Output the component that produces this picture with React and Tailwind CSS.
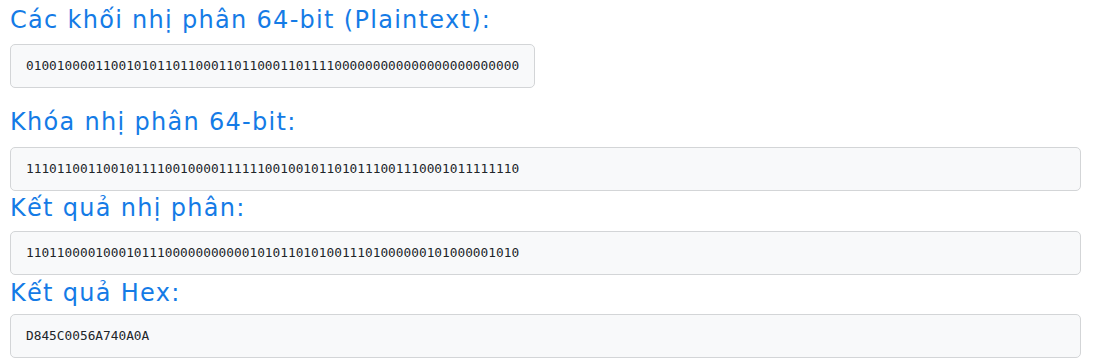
import React from "react";

const heading =
  "text-[24px] leading-[28px] text-[#147be6] font-['DejaVu_Sans',sans-serif] tracking-[1.3px]";
const box =
  "bg-[#f8f9fa] border border-[#d3d5d7] rounded-[5px] px-[15px] py-[14px] text-[12.8px] leading-[14px] text-[#212529] font-['DejaVu_Sans_Mono',monospace] whitespace-pre";

export default function App() {
  return (
    <div className="bg-white min-h-[360px] pl-[10px] pr-[26px] pt-[6px]">
      <h2 className={`${heading} mb-[10px]`}>
        Các khối nhị phân 64-bit (Plaintext):
      </h2>
      <div className={`${box} inline-block mb-[20px]`}>
        0100100001100101011011000110110001101111000000000000000000000000
      </div>

      <h2 className={`${heading} mb-[11px]`}>Khóa nhị phân 64-bit:</h2>
      <div className={`${box} mb-[3px]`}>
        1110110011001011110010000111111001001011010111001110001011111110
      </div>

      <h2 className={`${heading} mb-[9px]`}>Kết quả nhị phân:</h2>
      <div className={`${box} mb-[4px]`}>
        1101100001000101110000000000010101101010011101000000101000001010
      </div>

      <h2 className={`${heading} mb-[7px]`}>Kết quả Hex:</h2>
      <div className={box}>D845C0056A740A0A</div>
    </div>
  );
}
